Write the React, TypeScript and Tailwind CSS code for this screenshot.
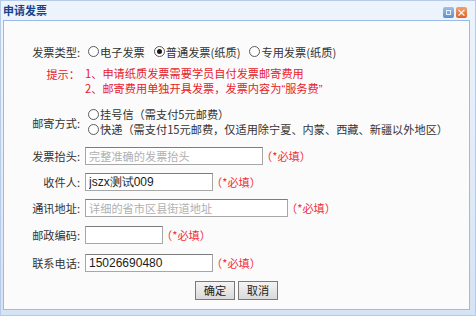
import React from 'react';

const font = { fontFamily: '"Noto Sans CJK SC", "Noto Sans", sans-serif' };
const latin = { fontFamily: '"Liberation Sans", Arial, sans-serif' };

function Radio({ checked, label }: { checked?: boolean; label: string }) {
    return (
        <span className="inline-flex items-center">
            <span className="w-[11px] h-[11px] rounded-full border border-[#5a5a5a] bg-white flex items-center justify-center mr-[1px]">
                {checked && <span className="w-[5px] h-[5px] rounded-full bg-[#1a1a1a]" />}
            </span>
            {label}
        </span>
    );
}

function Required() {
    return <span className="ml-[-2px] text-[#f0303a]">（*必填）</span>;
}

function Field({ label, width, value, placeholder }: { label: string; width: string; value?: string; placeholder?: string }) {
    return (
        <div className="flex items-center h-[18px]">
            <div className="w-[76px] text-right">{label}</div>
            <input
                readOnly
                defaultValue={value}
                placeholder={placeholder}
                style={value ? latin : font}
                className={`${width} ml-[5px] h-[18px] border border-[#a7a7a7] border-t-[#7c7c7c] bg-white px-[3px] text-[12px] text-[#1a1a1a] outline-none placeholder:text-[#b0b0b0] placeholder:text-[11.2px]`}
            />
            <Required />
        </div>
    );
}

export default function App() {
    return (
        <div style={font} className="w-[476px] h-[316px] flex flex-col bg-gradient-to-b from-[#eef4fc] to-[#d6e3f4] border border-[#b5cbe8] text-[11.2px] text-[#333]">
            <div className="h-[19px] flex items-center justify-between pl-[2px] pr-[8px]">
                <span className="text-[11px] font-bold text-[#15428b]">申请发票</span>
                <div className="flex gap-[2px] mt-[4px]">
                    <span className="w-[11px] h-[11px] rounded-[2px] bg-gradient-to-b from-[#9cc0e8] to-[#5d8fcc] flex items-center justify-center">
                        <span className="w-[5px] h-[5px] border border-[#e6f0fb]" />
                    </span>
                    <span className="w-[11px] h-[11px] rounded-[2px] bg-gradient-to-b from-[#f2a070] to-[#d9622c] flex items-center justify-center text-white text-[10px] leading-none font-bold">
                        ×
                    </span>
                </div>
            </div>

            <div className="flex-1 ml-[2px] mr-[5px] mb-[5px] border border-[#99bbe8] bg-[#fbfbfb] flex flex-col">
                <div className="flex items-center h-[18px] mt-[22px]">
                    <div className="w-[76px] text-right">发票类型:</div>
                    <div className="ml-[8px] flex items-center gap-[9px]">
                        <Radio label="电子发票" />
                        <Radio checked label="普通发票(纸质)" />
                        <Radio label="专用发票(纸质)" />
                    </div>
                </div>

                <div className="flex mt-[5px] leading-[15px] text-[#e8202a]">
                    <div className="w-[76px] text-right pt-[1px]">提示：</div>
                    <div className="ml-[5px]">
                        <div>1、申请纸质发票需要学员自付发票邮寄费用</div>
                        <div>
                            2、邮寄费用单独开具发票，发票内容为<span style={latin}>“</span>服务费<span style={latin}>”</span>
                        </div>
                    </div>
                </div>

                <div className="flex items-center mt-[10px] leading-[15px]">
                    <div className="w-[76px] text-right pt-[2px]">邮寄方式:</div>
                    <div className="ml-[8px] flex flex-col">
                        <Radio label="挂号信（需支付5元邮费）" />
                        <Radio label="快递（需支付15元邮费，仅适用除宁夏、内蒙、西藏、新疆以外地区）" />
                    </div>
                </div>

                <div className="flex flex-col gap-[8px] mt-[10px]">
                    <Field label="发票抬头:" width="w-[178px]" placeholder="完整准确的发票抬头" />
                    <Field label="收件人:" width="w-[128px]" value="jszx测试009" />
                    <Field label="通讯地址:" width="w-[203px]" placeholder="详细的省市区县街道地址" />
                    <div className="mt-[1px]">
                        <Field label="邮政编码:" width="w-[78px]" />
                    </div>
                    <div className="mt-[2px]">
                        <Field label="联系电话:" width="w-[128px]" value="15026690480" />
                    </div>
                </div>

                <div className="flex justify-center gap-[3px] mt-[9px]">
                    <button style={font} className="w-[40px] h-[19px] border border-[#7a7a7a] bg-gradient-to-b from-[#f4f4f4] to-[#dadada] text-[11.2px] text-[#222] leading-none">确定</button>
                    <button style={font} className="w-[40px] h-[19px] border border-[#7a7a7a] bg-gradient-to-b from-[#f4f4f4] to-[#dadada] text-[11.2px] text-[#222] leading-none">取消</button>
                </div>
            </div>
        </div>
    );
}
